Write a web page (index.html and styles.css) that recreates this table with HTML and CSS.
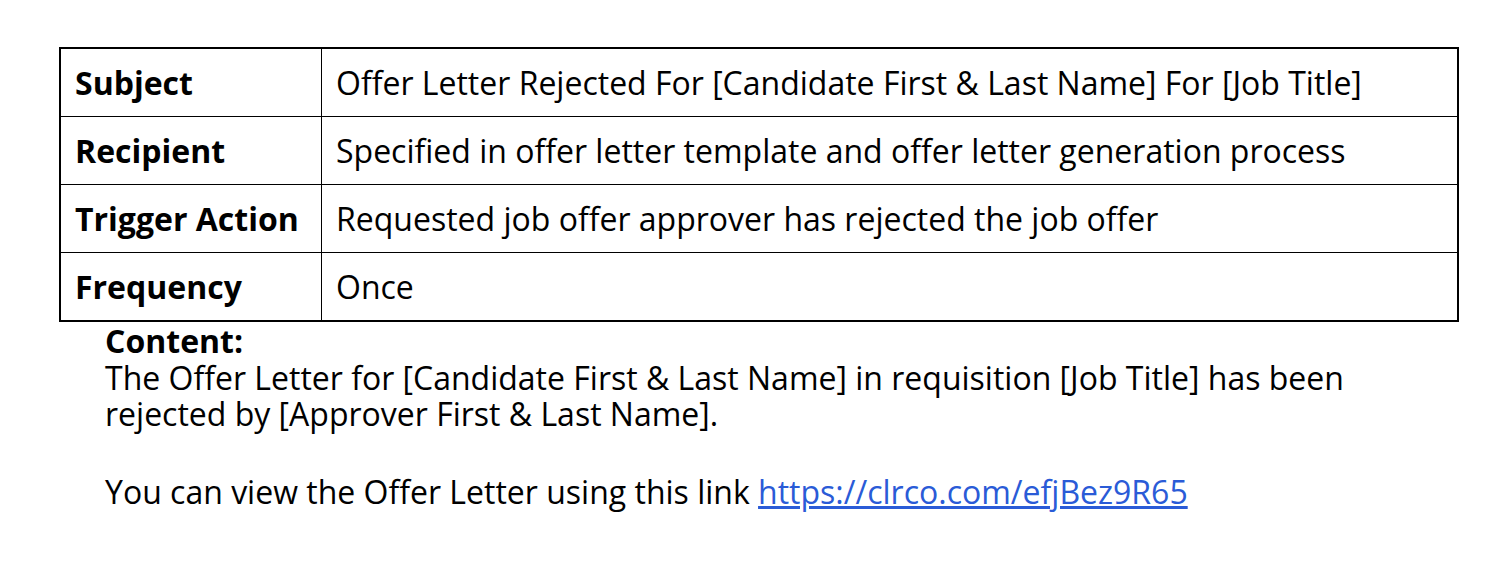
FILE: index.html
```html
<!DOCTYPE html>
<html>
<head>
<meta charset="utf-8">
<link rel="stylesheet" href="styles.css">
</head>
<body>
<div class="page">
  <table class="info">
    <tr><th>Subject</th><td>Offer Letter Rejected For [Candidate First &amp; Last Name] For [Job Title]</td></tr>
    <tr><th>Recipient</th><td>Specified in offer letter template and offer letter generation process</td></tr>
    <tr><th>Trigger Action</th><td>Requested job offer approver has rejected the job offer</td></tr>
    <tr><th>Frequency</th><td>Once</td></tr>
  </table>
  <div class="content">
    <div class="label">Content:</div>
    <p>The Offer Letter for [Candidate First &amp; Last Name] in requisition [Job Title] has been rejected by [Approver First &amp; Last Name].</p>
    <p>You can view the Offer Letter using this link <a href="#">https://clrco.com/efjBez9R65</a></p>
  </div>
</div>
</body>
</html>
```
FILE: styles.css
```css
html, body {
  margin: 0;
  padding: 0;
  background: #fff;
}
body {
  font-family: "Open Sans", "Noto Sans", sans-serif;
  color: #000;
  font-size: 32px;
}
.page {
  padding: 47px 53px 0 59px;
}
.info {
  width: 1400px;
  border-collapse: collapse;
  border: 2px solid #000;
}
.info th, .info td {
  border: 1.5px solid #000;
  height: 67px;
  padding: 0 14px;
  text-align: left;
  vertical-align: middle;
  white-space: nowrap;
}
.info th {
  width: 232px;
  font-weight: 700;
}
.info td {
  font-weight: 400;
}
.content {
  padding-left: 46px;
  width: 1260px;
}
.label {
  font-weight: 700;
  line-height: 38px;
}
.content p {
  margin: 0 0 42px 0;
  line-height: 36px;
}
.content a {
  color: #2a5bd7;
  text-decoration: underline;
}
```
